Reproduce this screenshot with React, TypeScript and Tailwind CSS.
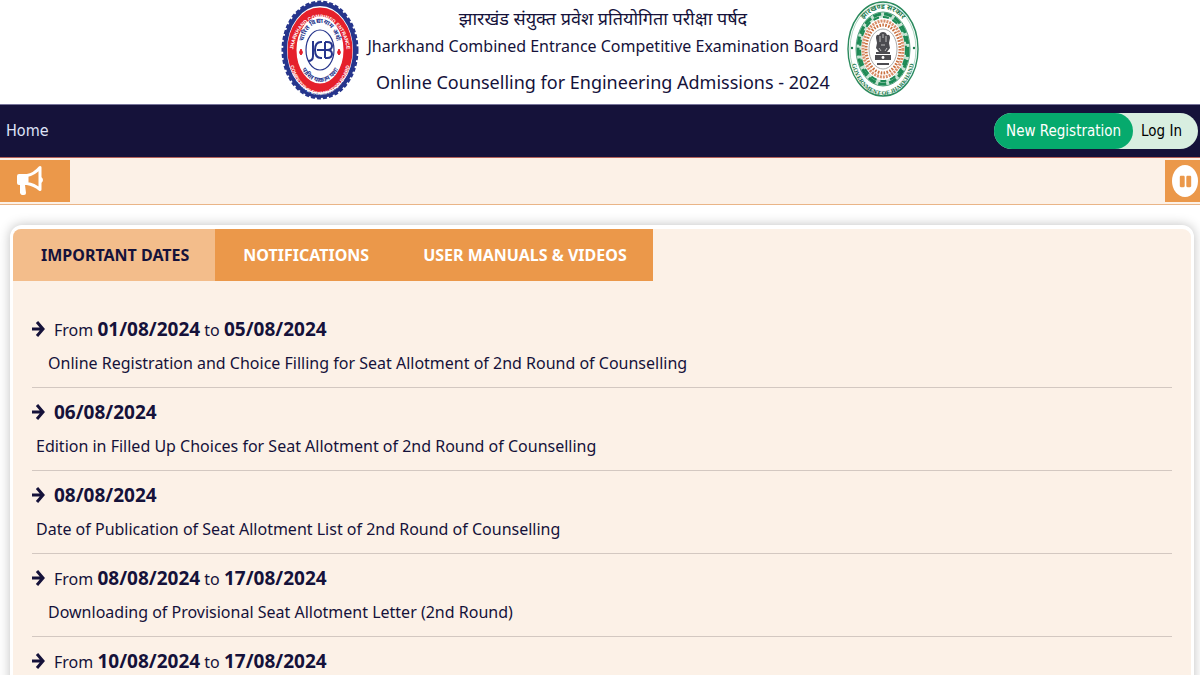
import type { ReactNode } from "react";
import { FaPause } from "react-icons/fa";

interface DateEntry {
  from?: string;
  to: string;
  title?: string;
}

const entries: DateEntry[] = [
  {
    from: "01/08/2024",
    to: "05/08/2024",
    title: "Online Registration and Choice Filling for Seat Allotment of 2nd Round of Counselling",
  },
  { to: "06/08/2024", title: "Edition in Filled Up Choices for Seat Allotment of 2nd Round of Counselling" },
  { to: "08/08/2024", title: "Date of Publication of Seat Allotment List of 2nd Round of Counselling" },
  { from: "08/08/2024", to: "17/08/2024", title: "Downloading of Provisional Seat Allotment Letter (2nd Round)" },
  { from: "10/08/2024", to: "17/08/2024" },
];

function BoardLogo() {
  return (
    <svg width="78" height="100" viewBox="0 0 78 100" role="img" aria-label="JCECEB" className="shrink-0">
      <defs>
        <path id="b-top" d="M12 55A27 37 0 1 1 66 55" />
        <path id="b-bottom" d="M8 54A31 41 0 0 0 70 54" />
        <path id="b-in-top" d="M22 47A17 24 0 0 1 56 47" />
        <path id="b-in-bottom" d="M17 53A22 29 0 0 0 61 53" />
      </defs>
      <ellipse cx="39" cy="50" rx="35" ry="46" fill="#fff" stroke="#26358c" strokeWidth="4" />
      <ellipse cx="39" cy="50" rx="37" ry="48" fill="none" stroke="#26358c" strokeWidth="3" strokeDasharray="4 2" />
      <ellipse cx="39" cy="50" rx="28" ry="38" fill="#fff" stroke="#e5202b" strokeWidth="9" />
      <ellipse cx="39" cy="50" rx="14" ry="20" fill="none" stroke="#26358c" strokeWidth="1.2" />
      <g fontFamily="Liberation Sans, sans-serif" fontWeight="700" fontSize="5" fill="#fff" textAnchor="middle">
        <text>
          <textPath href="#b-top" startOffset="50%">JHARKHAND COMBINED ENTRANCE</textPath>
        </text>
        <text>
          <textPath href="#b-bottom" startOffset="50%">COMPETITIVE EXAMINATION BOARD</textPath>
        </text>
      </g>
      <g fontFamily="Noto Sans Devanagari, Noto Sans, sans-serif" fontWeight="700" fontSize="6.5" fill="#26358c" textAnchor="middle">
        <text>
          <textPath href="#b-in-top" startOffset="50%">चारित विद्यायाम अर्थः</textPath>
        </text>
        <text>
          <textPath href="#b-in-bottom" startOffset="50%">पारित यत्काम यशः</textPath>
        </text>
      </g>
      <path d="M20 49q3 4 0 6q-3-2 0-6M58 49q3 4 0 6q-3-2 0-6" fill="#e5202b" stroke="#e5202b" />
      <g fill="none" stroke="#26358c" strokeWidth="2">
        <path d="M32 41v15q0 5-5 5M41 42h-1q-6 0-6 8t6 8h1M36 50h7M44 42v16M44 42h2q5 0 5 4t-5 4h-2M46 50q5 0 5 4t-5 4h-2" />
      </g>
    </svg>
  );
}

function StateEmblem() {
  return (
    <svg width="72" height="98" viewBox="0 0 72 98" role="img" aria-label="Government of Jharkhand" className="shrink-0">
      <defs>
        <path id="s-top" d="M7 49A29 40 0 0 1 65 49" />
        <path id="s-bottom" d="M4 53A32 42 0 0 0 68 53" />
      </defs>
      <ellipse cx="36" cy="49" rx="35" ry="47" fill="#fff" stroke="#2b8a5e" strokeWidth="1.4" />
      <ellipse cx="36" cy="49" rx="33" ry="45" fill="none" stroke="#8cc5a8" strokeWidth="0.7" />
      <ellipse cx="36" cy="49" rx="24" ry="34" fill="none" stroke="#c9e4d4" strokeWidth="5" />
      <ellipse cx="36" cy="49" rx="25" ry="35" fill="none" stroke="#1d8a55" strokeWidth="3" strokeDasharray="8 3" />
      <ellipse cx="36" cy="49" rx="23" ry="32" fill="none" stroke="#1d8a55" strokeWidth="2" strokeDasharray="6 4" />
      <ellipse cx="36" cy="49" rx="27" ry="37" fill="none" stroke="#2b8a5e" strokeWidth="0.8" />
      <ellipse cx="36" cy="49" rx="20" ry="28" fill="none" stroke="#d98f6a" strokeWidth="3" strokeDasharray="2 1" />
      <ellipse cx="36" cy="49" rx="17" ry="24" fill="none" stroke="#c9703f" strokeWidth="3" strokeDasharray="1.6 1.4" />
      <ellipse cx="36" cy="49" rx="14" ry="20" fill="#fff" stroke="#aaa" strokeWidth="1" />
      <g fontFamily="Liberation Serif, serif" fontWeight="700" fill="#1d7a4d" textAnchor="middle">
        <text fontSize="7" fontFamily="Noto Sans Devanagari, Noto Sans, sans-serif">
          <textPath href="#s-top" startOffset="50%">झारखण्ड सरकार</textPath>
        </text>
        <text fontSize="6">
          <textPath href="#s-bottom" startOffset="50%">GOVERNMENT OF JHARKHAND</textPath>
        </text>
      </g>
      <circle cx="5" cy="48" r="1.2" fill="#1d7a4d" />
      <circle cx="67" cy="48" r="1.2" fill="#1d7a4d" />
      {/* lion capital */}
      <g fill="#4b4b50">
        <path d="M32 35q1-3 4-3t4 3q3-1 3 3l-1 5 1 5-3 4h-8l-3-4 1-5-1-5q0-4 3-3z" />
        <path d="M29 52h14v2H29zM28 55h16v5H28zM30 63h12v2H30z" />
      </g>
      <path d="M33 36v6M39 36v6M36 34v4M34 45h4M32 48l2 3M40 48l-2 3" stroke="#ddd" strokeWidth="0.8" />
      <circle cx="36" cy="57.5" r="1.4" fill="#fff" />
    </svg>
  );
}

function Megaphone() {
  return (
    <svg width="28" height="32" viewBox="0 0 28 32" fill="none" aria-hidden="true">
      <path d="M3 9h9v11H9l1 8q0 2-2 2H6q-1 0-2-2V20H3q-2 0-2-2v-7q0-2 2-2z" fill="#fff" />
      <path d="M11 10.500q7-1 13-8v22q-6-5-13-6z" stroke="#fff" strokeWidth="3" strokeLinejoin="round" />
      <path d="M25 12q2 1 2 3t-2 3z" fill="#fff" />
    </svg>
  );
}

function Arrow() {
  return (
    <svg width="14" height="18" viewBox="0 0 14 18" fill="none" stroke="currentColor" strokeWidth="3" aria-hidden="true">
      <path d="M0 9h11M5 2l6 7-6 7" />
    </svg>
  );
}

function Tab({ active = false, children }: { active?: boolean; children: ReactNode }) {
  return (
    <button
      type="button"
      role="tab"
      aria-selected={active}
      className={
        active
          ? "h-13 bg-[#f3bd8b] pr-[26px] pl-7 text-base font-bold text-[#15123a]"
          : "h-13 bg-[#eb984a] pr-[26px] pl-7 text-base font-bold text-white"
      }
    >
      {children}
    </button>
  );
}

export default function App() {
  return (
    <div className="h-screen overflow-hidden bg-white font-['Noto_Sans','DejaVu_Sans',sans-serif] text-[#15123a]">
      <header className="flex h-26 justify-center gap-2">
        <BoardLogo />
        <div className="pt-0.5 text-center">
          <p className="text-lg leading-8">झारखंड संयुक्त प्रवेश प्रतियोगिता परीक्षा पर्षद</p>
          <p className="text-base leading-6">Jharkhand Combined Entrance Competitive Examination Board</p>
          <h1 className="text-lg leading-12">Online Counselling for Engineering Admissions - 2024</h1>
        </div>
        <StateEmblem />
      </header>

      <nav className="flex h-[53px] items-center justify-between border-t border-[#77749a] bg-[#15123a] pr-0.5 pl-1.5 font-['DejaVu_Sans_Condensed','Noto_Sans',sans-serif]">
        <a href="#home" className="text-base text-[#dfe3f7]">Home</a>
        <div className="flex h-9 rounded-full bg-[#d8eee0] text-[15px]">
          <a href="#register" className="flex items-center rounded-full bg-[#06aa6d] px-3 text-white">
            New Registration
          </a>
          <a href="#login" className="flex items-center pr-4 pl-2 text-black">Log In</a>
        </div>
      </nav>

      <div className="flex h-12 items-center justify-between border-t border-b border-t-[#b5625a] border-b-[#eab587] bg-[#fcf1e7]">
        <div className="flex h-[42px] w-[70px] items-center bg-[#eb984a] pl-4">
          <Megaphone />
        </div>
        <button type="button" aria-label="Pause" className="flex h-[42px] w-[35px] items-center justify-end bg-[#eb984a] pr-0.5 text-[#eb984a]">
          <span className="flex h-8 w-[26px] items-center justify-center rounded-[50%] bg-white">
            <FaPause size={13} />
          </span>
        </button>
      </div>

      <main className="mt-5 mr-1.5 ml-2.5 rounded-xl border-3 border-t-4 border-white bg-[#fcf1e7] shadow-[0_0_12px_rgba(0,0,0,0.25)]">
        <div role="tablist" className="flex overflow-hidden rounded-tl-lg">
          <Tab active>IMPORTANT DATES</Tab>
          <Tab>NOTIFICATIONS</Tab>
          <Tab>USER MANUALS &amp; VIDEOS</Tab>
        </div>
        <ul className="px-[19px] pt-6">
          {entries.map((entry) => (
            <li key={entry.title ?? entry.to} className="h-[83px] border-b border-[#d3c8c1] pt-1.5">
              <p className="flex h-9 items-center gap-2 text-base">
                <Arrow />
                <span>
                  {entry.from && (
                    <>
                      From <b className="text-[19px]">{entry.from}</b> to{" "}
                    </>
                  )}
                  <b className="text-[19px]">{entry.to}</b>
                </span>
              </p>
              <p className={entry.from ? "pl-4 text-base leading-8" : "pl-1 text-base leading-8"}>{entry.title}</p>
            </li>
          ))}
        </ul>
      </main>
    </div>
  );
}
